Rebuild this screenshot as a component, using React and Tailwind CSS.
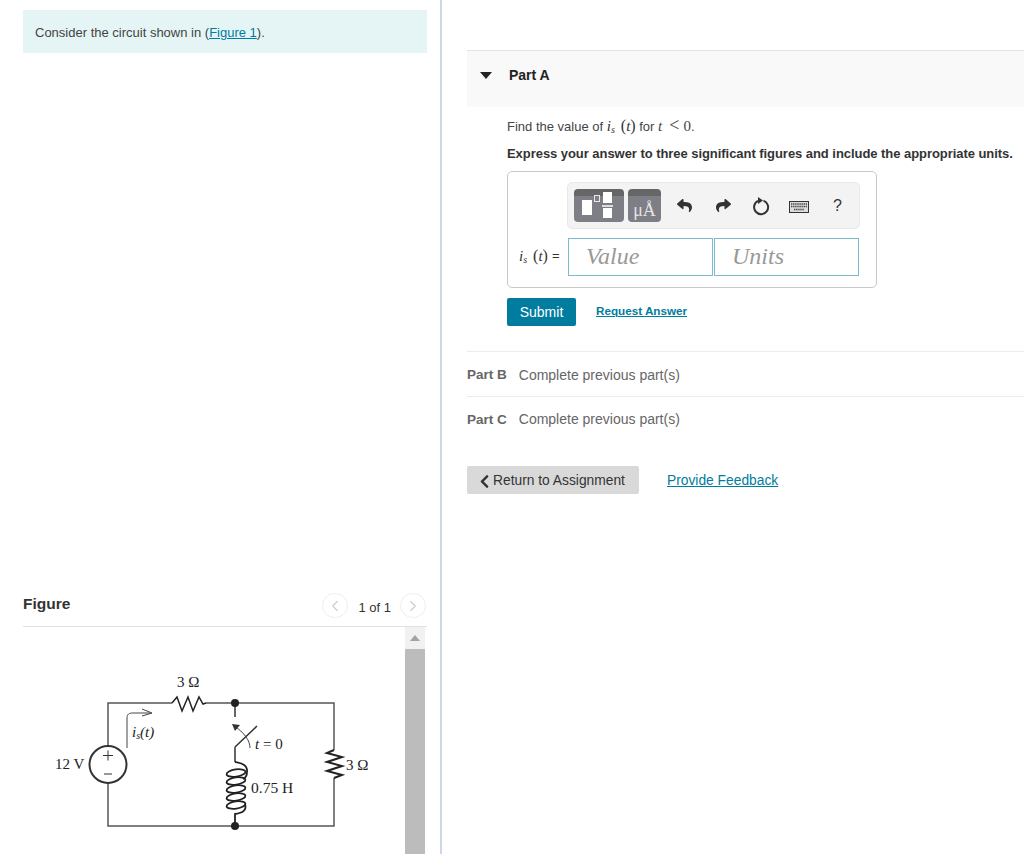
import { ChevronLeft, ChevronRight } from "lucide-react";
import { FaReply, FaShare, FaChevronLeft } from "react-icons/fa";

const SERIF = { fontFamily: "'Liberation Serif', serif" };

const Circuit = () => (
  <svg width="405" height="228" viewBox="0 1 405 228" className="block">
    <g fill="none" stroke="#555" strokeWidth="1.5">
      {/* outer loop */}
      <path d="M108 120V77H172M206 77H334V124M334 152V200H108V157" />
      {/* series resistor */}
      <path d="M172 77L177 71L182 85L188 71L193 85L199 71L203 78L206 77" stroke="#222" />
      {/* shunt resistor */}
      <path d="M334 124L327 127L342 131L327 136L342 140L327 145L342 149L334 152" stroke="#222" strokeWidth="2" />
      {/* source */}
      <circle cx="108" cy="138.5" r="18.5" stroke="#333" strokeWidth="2" />
      {/* switch */}
      <path d="M235 77V91M235 121L257 100M235 121V136" stroke="#333" />
      {/* coil */}
      <g stroke="#222" strokeWidth="1.8">
        <path d="M235 136C240 137 248 138 247 146M247 146C247 150 245 152 243 153" />
        <ellipse cx="236" cy="147" rx="9.5" ry="3.6" transform="rotate(-8 236 147)" />
        <ellipse cx="236" cy="155" rx="9.5" ry="3.6" transform="rotate(-8 236 155)" />
        <ellipse cx="236" cy="163" rx="9.5" ry="3.6" transform="rotate(-8 236 163)" />
        <ellipse cx="236" cy="171" rx="9.5" ry="3.6" transform="rotate(-8 236 171)" />
        <ellipse cx="236" cy="179" rx="9.5" ry="3.6" transform="rotate(-8 236 179)" />
        <path d="M245 178C247 184 243 187 235 188V200" />
      </g>
      {/* switch arrow */}
      <path d="M250 122C250 115 245 107 233 99" stroke="#444" strokeWidth="1" />
      {/* current arrow */}
      <path d="M127 122V92C127 88 129 87 133 87H150" stroke="#444" strokeWidth="1" />
      <path d="M142 83L152 87L142 90" stroke="#444" strokeWidth="1" />
      <path d="M103 129.5H113M108 124.5V134.5M104 148H112" stroke="#333" strokeWidth="1" />
    </g>
    <path d="M232 98L240 99L235 105Z" fill="#333" />
    <circle cx="235" cy="77" r="4" fill="#222" />
    <circle cx="235" cy="200" r="4" fill="#222" />
    <g fontSize="15" fill="#222" style={SERIF}>
      <text x="177" y="61">3 Ω</text>
      <text x="55" y="143">12 V</text>
      <text x="346" y="144">3 Ω</text>
      <text x="251" y="167" fontSize="15.5">0.75 H</text>
      <text x="255" y="123"><tspan fontStyle="italic">t</tspan> = 0</text>
      <text x="132" y="111" fontStyle="italic">i<tspan fontSize="10" dy="2">s</tspan><tspan dy="-2">(t)</tspan></text>
    </g>
  </svg>
);

const IsOfT = () => (
  <span style={SERIF} className="text-[15px] text-[#333]">
    <i>i</i><i className="relative top-[2px] text-[10px]">s</i><span className="ml-[6px] text-[16px]">(</span><i>t</i><span className="text-[16px]">)</span>
  </span>
);

export default function App() {
  return (
    <div className="flex h-[854px] overflow-hidden bg-white text-[13px] text-[#333]" style={{ fontFamily: "'Liberation Sans', Arial, sans-serif" }}>
      {/* left column */}
      <div className="w-[442px] shrink-0 border-r-2 border-[#c9d9ea] pl-[23px] pr-[13px] pt-[10px]">
        <div className="flex h-[43px] items-center bg-[#e5f5f6] px-3 pt-[2px] text-[#444]">
          <span>Consider the circuit shown in (<a className="text-[#007c9e] underline">Figure 1</a>).</span>
        </div>

        <div className="mt-[536px] flex h-[38px] items-center border-b border-[#e2e2e2] pb-[8px]">
          <span className="text-[15.5px] font-bold">Figure</span>
          <div className="ml-auto mr-[1px] mt-[4px] flex items-center">
            <span className="flex h-[25px] w-[26px] items-center justify-center rounded-full border border-[#eee] text-[#ccc]"><ChevronLeft size={18} strokeWidth={1.5} /></span>
            <span className="ml-[10px] mr-[9px] mt-[4px] text-[13px]">1 of 1</span>
            <span className="flex h-[25px] w-[26px] items-center justify-center rounded-full border border-[#eee] text-[#ccc]"><ChevronRight size={18} strokeWidth={1.5} /></span>
          </div>
        </div>

        <div className="flex">
          <div className="-ml-[23px] w-[405px] shrink-0"><Circuit /></div>
          <div className="w-[20px] shrink-0">
            <div className="flex h-[22px] items-center justify-center bg-[#f1f1f1]">
              <span className="h-0 w-0 border-x-[5px] border-b-[6px] border-x-transparent border-b-[#a3a3a3]" />
            </div>
            <div className="h-[210px] bg-[#bcbcbc]" />
          </div>
        </div>
      </div>

      {/* right column */}
      <div className="flex-1 pl-[25px] pt-[50px]">
        <div className="flex h-[57px] items-center border-t border-[#e5e5e5] bg-[#f9f9f9] pb-[8px]">
          <span className="ml-[13px] h-0 w-0 border-x-[6px] border-t-[7px] border-x-transparent border-t-[#222]" />
          <span className="ml-[17px] text-[14px] font-bold text-[#222]">Part A</span>
        </div>

        <div className="ml-[40px]">
          <p className="mt-[9px] h-[18px] whitespace-nowrap leading-[18px] text-[#444]">
            Find the value of <IsOfT /> for <span style={SERIF} className="text-[15px]"><i>t</i><span className="ml-[7px] mr-[4px] text-[18px]">&lt;</span>0</span>.
          </p>
          <p className="mt-[11px] whitespace-nowrap font-bold leading-[18px] tracking-[-0.05px]">
            Express your answer to three significant figures and include the appropriate units.
          </p>

          {/* answer box */}
          <div className="mt-[8px] h-[117px] w-[370px] rounded-[5px] border border-[#c9c9c9] pl-[11px] pt-[10px]">
            <div className="ml-[48px] flex h-[47px] w-[293px] items-center rounded-[5px] border border-[#e8e8e8] bg-[#f3f3f3] pl-[6px]">
              <div className="relative h-[33px] w-[50px] rounded-[4px] bg-[linear-gradient(#666_0_7px,#7e7e86_7px)]">
                <span className="absolute left-[8px] top-[11px] h-[15px] w-[10px] bg-white" />
                <span className="absolute left-[20px] top-[6px] h-[7px] w-[6px] border border-[#e8e8e8]" />
                <span className="absolute left-[29px] top-[3px] h-[11px] w-[9px] bg-white" />
                <span className="absolute left-[28px] top-[16px] h-[2px] w-[11px] bg-[#ddd]" />
                <span className="absolute left-[29px] top-[19px] h-[10px] w-[9px] bg-white" />
              </div>
              <div className="ml-[4px] flex h-[33px] w-[33px] items-end justify-center rounded-[4px] bg-[linear-gradient(#666_0_7px,#7e7e86_7px)] pb-[3px] text-[18px] leading-none text-[#e4e4e4]" style={SERIF}>
                μÅ
              </div>
              <FaReply size={15} className="ml-[16px] text-[#333]" />
              <FaShare size={15} className="ml-[24px] text-[#333]" />
              <svg width="20" height="20" viewBox="0 0 20 20" fill="none" stroke="#333" strokeWidth="2" className="ml-[20px]">
                <path d="M12.5 4.6A7 7 0 1 1 7 4.9" />
                <path d="M7 1l5 3.5-5 3.5z" fill="#333" strokeWidth="0" />
              </svg>
              <svg width="20" height="12" viewBox="0 0 20 12" className="ml-[18px] mt-[3px]">
                <rect x=".5" y=".5" width="19" height="11" fill="#ddd" stroke="#333" />
                <path d="M2 3h16M2 5.5h16M5 8.5h10" stroke="#444" strokeWidth="1.4" strokeDasharray="1.4 .7" />
              </svg>
              <span className="ml-[24px] text-[16px] text-[#333]">?</span>
            </div>

            <div className="mt-[9px] flex h-[38px] items-center">
              <div className="flex w-[49px] items-center whitespace-nowrap pb-[2px]">
                <IsOfT />
                <span className="ml-[4px] text-[13px]">=</span>
              </div>
              <div className="flex h-[38px] w-[145px] items-center border border-[#7cbccf] pb-[2px] pl-[17px] text-[24px] italic text-[#999]" style={SERIF}>Value</div>
              <div className="ml-[1px] flex h-[38px] w-[145px] items-center border border-[#7cbccf] pb-[2px] pl-[17px] text-[24px] italic text-[#999]" style={SERIF}>Units</div>
            </div>
          </div>

          <div className="mt-[10px] flex items-center">
            <button className="h-[28px] w-[69px] rounded-[2px] bg-[#007c9e] text-[14px] text-white">Submit</button>
            <a className="-mt-[2px] ml-[20px] text-[11.7px] font-bold text-[#007c9e] underline">Request Answer</a>
          </div>
        </div>

        <div className="mt-[25px] flex h-[45px] items-center border-t border-[#ececec] pt-[2px] text-[#666]">
          <span className="text-[13.5px] font-bold">Part B</span>
          <span className="ml-[12px] text-[14px]">Complete previous part(s)</span>
        </div>
        <div className="flex h-[45px] items-center border-t border-[#ececec] text-[#666]">
          <span className="mt-[2px] text-[13.5px] font-bold">Part C</span>
          <span className="ml-[12px] text-[14px]">Complete previous part(s)</span>
        </div>

        <div className="mt-[25px] flex items-center">
          <button className="flex h-[28px] w-[172px] items-center rounded-[2px] bg-[#d9d9d9] pl-[10px] pt-[2px] text-[13.8px] text-[#333]">
            <FaChevronLeft size={15} className="mr-[1px] shrink-0" />
            Return to Assignment
          </button>
          <a className="ml-[28px] mt-[2px] text-[13.8px] text-[#007c9e] underline">Provide Feedback</a>
        </div>
      </div>
    </div>
  );
}
